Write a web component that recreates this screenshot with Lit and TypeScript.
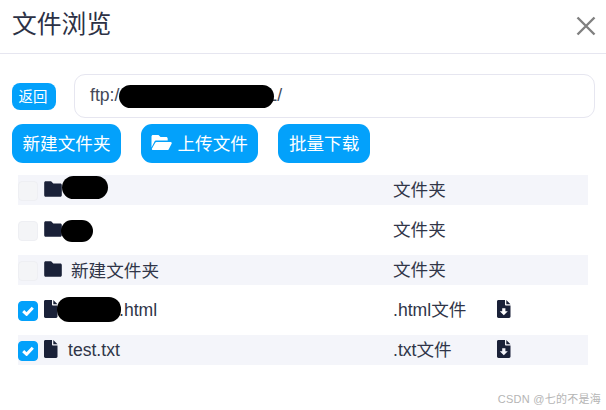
import { LitElement, html, css, svg } from "lit";
import { customElement } from "lit/decorators.js";

const folderIcon = svg`<path d="M1.700 0.300h5.400l2.200 2.200h7c.9 0 1.500.7 1.500 1.500v10.300c0 .9-.7 1.500-1.500 1.500H1.700C.8 15.800.200 15.200.200 14.300V1.800C.200 1 .8.300 1.700.300z"/>`;
const fileIcon = svg`<path d="M1.500 0H8v4.400c0 .7.5 1.200 1.200 1.200h4.300v11c0 .8-.6 1.400-1.400 1.400H1.500C.7 18 0 17.400 0 16.600V1.400C0 .6.700 0 1.500 0zM9.300 0l4.200 4.300H9.300z"/>`;
const downloadIcon = svg`<path fill-rule="evenodd" d="M1.500 0H8v4.400c0 .7.5 1.200 1.200 1.200h4.300v11c0 .8-.6 1.400-1.400 1.400H1.500C.7 18 0 17.400 0 16.600V1.400C0 .6.700 0 1.500 0zM5.200 8.200v3.100H2.800l4 4 4-4H8.400V8.200zM9.300 0l4.200 4.300H9.300z"/>`;

interface Mask { left: number; top: number; width: number; height: number; }
interface Row {
  name: string;
  type: string;
  file: boolean;
  mask?: Mask;
  nameLeft: number;
}

const rows: Row[] = [
  { name: "", type: "文件夹", file: false, mask: { left: 44, top: 1, width: 46, height: 23 }, nameLeft: 0 },
  { name: "", type: "文件夹", file: false, mask: { left: 43, top: 5, width: 32, height: 22 }, nameLeft: 0 },
  { name: "新建文件夹", type: "文件夹", file: false, nameLeft: 9 },
  { name: ".html", type: ".html文件", file: true, mask: { left: 39, top: 2, width: 64, height: 25 }, nameLeft: 61 },
  { name: "test.txt", type: ".txt文件", file: true, nameLeft: 10 },
];

@customElement("app-root")
export class AppRoot extends LitElement {
  static styles = css`
    :host {
      display: block;
      position: relative;
      width: 606px;
      height: 410px;
      background: #fff;
      overflow: hidden;
      font-family: "Liberation Sans", "Noto Sans CJK SC", sans-serif;
      color: #303548;
    }
    .head {
      height: 54px;
      box-sizing: border-box;
      display: flex;
      align-items: center;
      justify-content: space-between;
      padding: 0 10px 4px 12px;
      border-bottom: 1px solid #e6e6f0;
    }
    .title { font-size: 24.8px; line-height: 30px; color: #2c3145; }
    .close { width: 20px; height: 20px; display: block; stroke: #808080; stroke-width: 2.4; margin-top: 3px; }
    .path-row {
      display: flex;
      align-items: center;
      gap: 18px;
      padding: 20px 11px 0 12px;
    }
    .back {
      width: 44px;
      height: 27px;
      box-sizing: border-box;
      border-radius: 8px;
      background: #03a1fb;
      color: #fff;
      font-size: 14.4px;
      display: flex;
      align-items: center;
      justify-content: center;
      padding: 0 2px 2px 0;
    }
    .path {
      flex: 1;
      height: 44px;
      box-sizing: border-box;
      border: 1px solid #e6e6f0;
      border-radius: 11px;
      padding: 0 0 2px 15px;
      font-size: 17.6px;
      display: flex;
      align-items: center;
      color: #444857;
      white-space: pre;
    }
    .blob { display: block; background: #000; border-radius: 12px; }
    .path .blob { position: relative; width: 155px; height: 23px; margin: 2px -7px 0 0; flex: none; }
    .tools {
      display: flex;
      gap: 20px;
      padding: 6px 0 0 12px;
    }
    .btn {
      height: 39px;
      box-sizing: border-box;
      border-radius: 11px;
      background: #03a1fb;
      color: #fff;
      font-size: 17.6px;
      display: flex;
      align-items: center;
      justify-content: center;
      gap: 5px;
      padding: 0 10.5px 2px;
    }
    .btn svg { width: 21px; height: 17px; fill: #fff; display: block; }
    .list {
      display: flex;
      flex-direction: column;
      gap: 10px;
      margin: 12px 18px 0 18px;
    }
    .row {
      position: relative;
      height: 30px;
      display: flex;
      align-items: center;
      font-size: 17.6px;
      color: #303548;
    }
    .row:nth-child(odd) { background: #f4f5fa; }
    .check {
      width: 20px;
      height: 20px;
      box-sizing: border-box;
      border-radius: 4px;
      background: #f4f5f7;
      border: 1px solid #eeeff3;
      flex: none;
      display: flex;
      align-items: center;
      justify-content: center;
      margin-top: 2px;
    }
    .check.on { background: #03a1fb; border-color: #03a1fb; }
    .check svg { width: 12px; height: 10px; fill: none; stroke: #fff; stroke-width: 3; display: block; }
    .icon { display: block; fill: #1a2138; flex: none; margin-left: 6px; }
    .icon.folder { width: 18px; height: 16px; margin-top: -2px; }
    .icon.file { width: 14px; height: 18px; margin-top: -2px; }
    .name { flex: none; width: 331px; box-sizing: border-box; white-space: nowrap; margin-top: -2px; }
    .row.is-file .name { width: 335px; margin-top: 1px; }
    .type { width: 104px; flex: none; margin-top: -4px; }
    .dl { width: 14px; height: 18px; display: block; fill: #1a2138; margin-top: -2px; }
    .row > .blob { position: absolute; }
    .mark {
      position: absolute;
      right: 5px;
      bottom: 4px;
      font-size: 11px;
      line-height: 14px;
      color: #b5b5b5;
      letter-spacing: 0.25px;
    }
  `;

  renderRow(r: Row) {
    const m = r.mask;
    return html`<div class="row ${r.file ? "is-file" : ""}">
      <span class="check ${r.file ? "on" : ""}">
        ${r.file
          ? html`<svg viewBox="0 0 12 10"><path d="M1.200 5.200 4.600 8.300 10.800 1.700"/></svg>`
          : null}
      </span>
      ${r.file
        ? html`<svg class="icon file" viewBox="0 0 14 18">${fileIcon}</svg>`
        : html`<svg class="icon folder" viewBox="0 0 18 16">${folderIcon}</svg>`}
      <span class="name" style="padding-left:${r.nameLeft}px">${r.name}</span>
      <span class="type">${r.type}</span>
      ${r.file ? html`<svg class="dl" viewBox="0 0 14 18">${downloadIcon}</svg>` : null}
      ${m
        ? html`<span class="blob" style="left:${m.left}px;top:${m.top}px;width:${m.width}px;height:${m.height}px"></span>`
        : null}
    </div>`;
  }

  render() {
    return html`
      <div class="head">
        <div class="title">文件浏览</div>
        <svg class="close" viewBox="0 0 20 20"><path d="M1.500 1.500 18.500 18.500M18.500 1.500 1.500 18.500"/></svg>
      </div>
      <div class="path-row">
        <div class="back">返回</div>
        <div class="path">ftp:/<span class="blob"></span>L/</div>
      </div>
      <div class="tools">
        <div class="btn">新建文件夹</div>
        <div class="btn">
          <svg viewBox="0 0 21 17"><path d="M2 1h5.500l2 2H15c1 0 1.700.7 1.700 1.700V6.500H5.500C4.500 6.500 3.700 7 3.300 7.900L.5 13.600V2.500C.5 1.700 1.200 1 2 1zM5.500 8h14.200c.8 0 1.300.8 1 1.500L17.900 15c-.2.600-.8 1-1.500 1H2c-.9 0-1.400-.9-1-1.600L4.100 8.900C4.400 8.300 4.900 8 5.500 8z"/></svg>
          上传文件
        </div>
        <div class="btn">批量下载</div>
      </div>
      <div class="list">${rows.map((r) => this.renderRow(r))}</div>
      <div class="mark">CSDN @七的不是海</div>
    `;
  }
}
